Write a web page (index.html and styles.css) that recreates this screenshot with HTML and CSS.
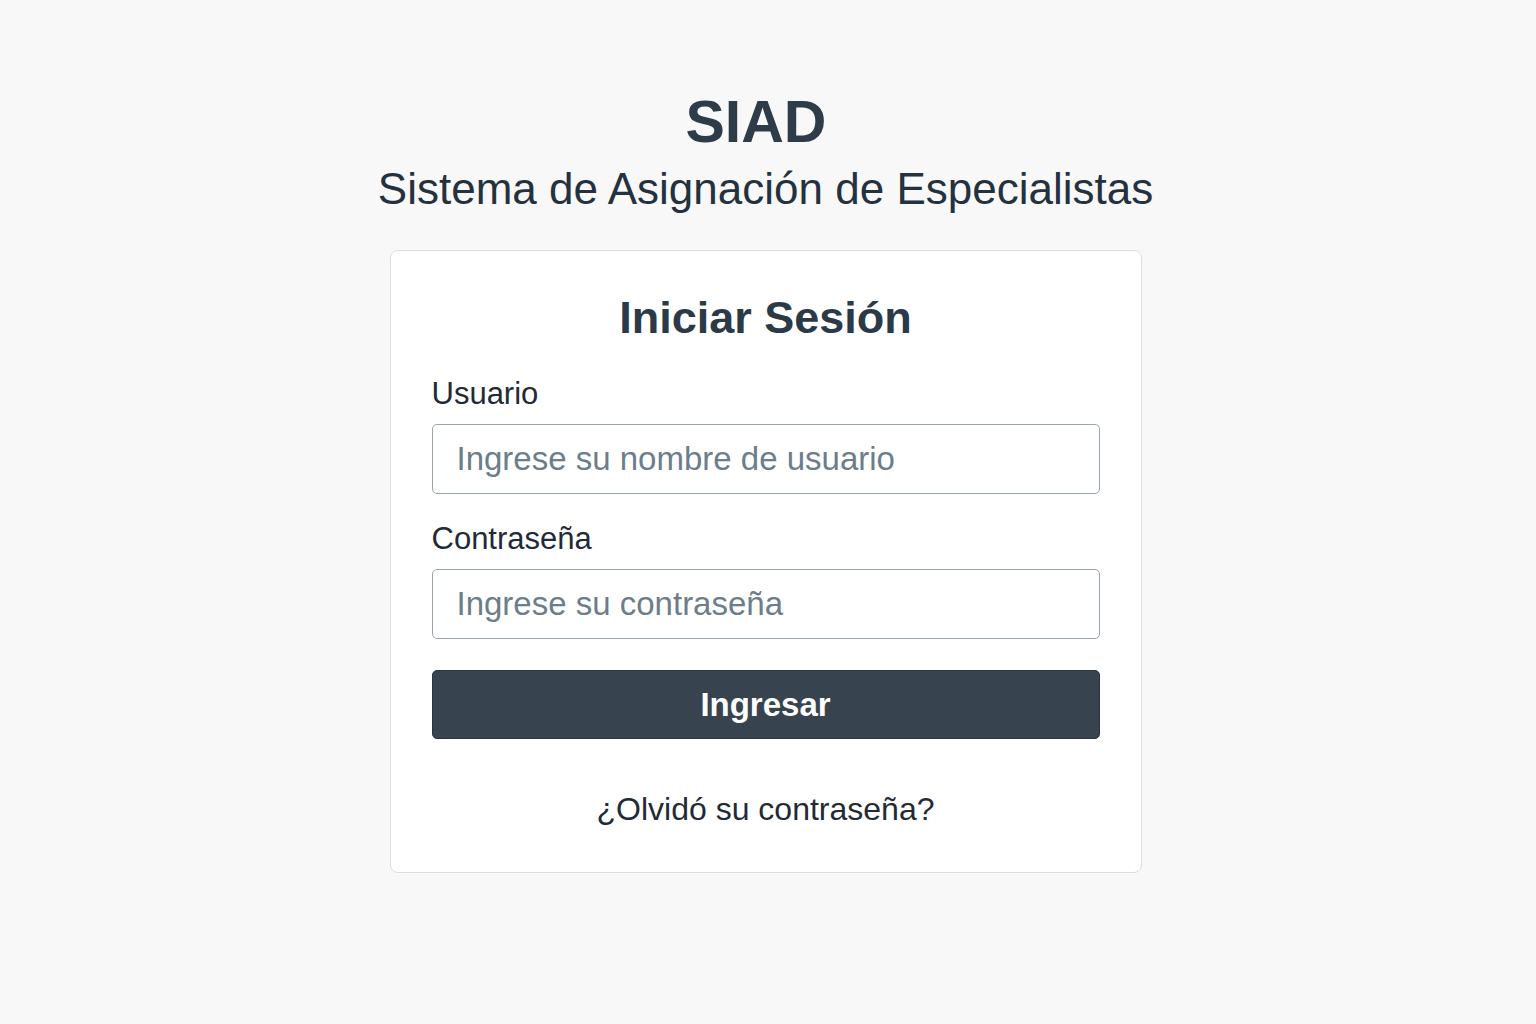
FILE: index.html
```html
<!DOCTYPE html>
<html lang="es">
<head>
<meta charset="utf-8">
<title>SIAD - Iniciar Sesión</title>
<link rel="stylesheet" href="styles.css">
</head>
<body>
<main class="page">
  <header class="brand">
    <h1 class="brand-title">SIAD</h1>
    <p class="brand-subtitle">Sistema de Asignación de Especialistas</p>
  </header>
  <section class="card">
    <h2 class="card-title">Iniciar Sesión</h2>
    <form class="form">
      <div class="field">
        <label class="field-label" for="user">Usuario</label>
        <input class="field-input" id="user" type="text" placeholder="Ingrese su nombre de usuario">
      </div>
      <div class="field">
        <label class="field-label" for="pass">Contraseña</label>
        <input class="field-input" id="pass" type="password" placeholder="Ingrese su contraseña">
      </div>
      <button class="btn" type="button">Ingresar</button>
    </form>
    <a class="forgot" href="#">¿Olvidó su contraseña?</a>
  </section>
</main>
</body>
</html>
```
FILE: styles.css
```css
* { box-sizing: border-box; }
html, body { margin: 0; padding: 0; }
body {
  background: #f8f8f8;
  font-family: "Liberation Sans", Arial, sans-serif;
  color: #2c3a47;
  width: 1536px;
  height: 1024px;
}
.page {
  display: flex;
  flex-direction: column;
  align-items: center;
  padding-top: 92px;
  padding-right: 5px;
}
.brand {
  display: flex;
  flex-direction: column;
  align-items: center;
}
.brand-title {
  margin: 0 19px 0 0;
  font-size: 59px;
  line-height: 60px;
  font-weight: 700;
  color: #2e3c49;
}
.brand-subtitle {
  margin: 15px 0 0;
  font-size: 44px;
  line-height: 44px;
  color: #24313e;
}
.card {
  margin-top: 39px;
  width: 752px;
  background: #ffffff;
  border: 1px solid #d9dfe3;
  border-radius: 8px;
  padding: 44px 41px 45px;
  display: flex;
  flex-direction: column;
  align-items: stretch;
}
.card-title {
  margin: 0;
  text-align: center;
  font-size: 45px;
  line-height: 45px;
  font-weight: 700;
  color: #2c3a47;
}
.form {
  margin-top: 36px;
  display: flex;
  flex-direction: column;
  gap: 27px;
}
.field {
  display: flex;
  flex-direction: column;
  gap: 12px;
}
.field-label {
  font-size: 31px;
  line-height: 36px;
  color: #1f2b37;
}
.field-input {
  height: 70px;
  border: 1px solid #97a5b0;
  border-radius: 5px;
  padding: 0 24px;
  font-family: "Liberation Sans", Arial, sans-serif;
  font-size: 33px;
  color: #2c3a47;
  background: #fff;
}
.field-input::placeholder {
  color: #6c7d8b;
}
.btn {
  margin-top: 4px;
  height: 69px;
  border: 1px solid #2a343e;
  border-radius: 5px;
  background: #37434f;
  color: #ffffff;
  font-family: "Liberation Sans", Arial, sans-serif;
  font-size: 33px;
  font-weight: 700;
}
.forgot {
  margin-top: 52px;
  text-align: center;
  font-size: 32px;
  line-height: 36px;
  color: #1f2b37;
  text-decoration: none;
}
```
